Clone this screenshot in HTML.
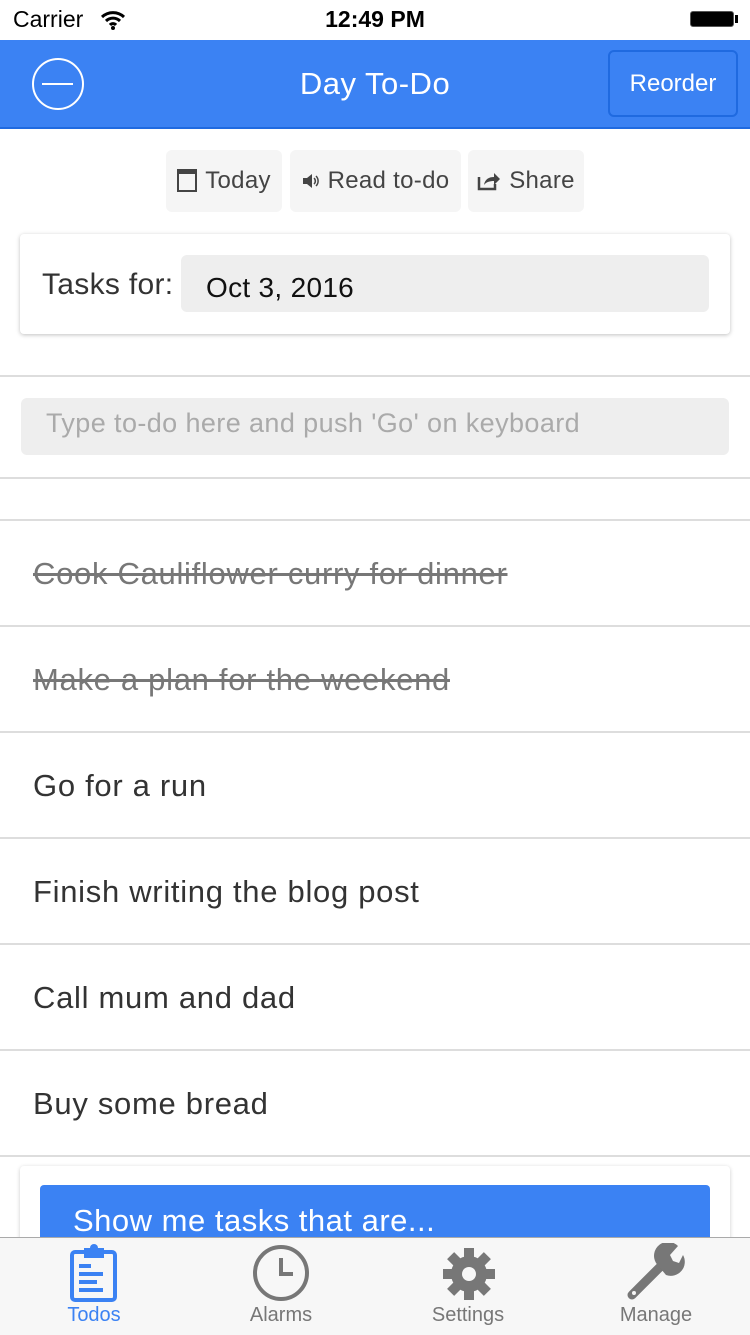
<!DOCTYPE html>
<html><head><style>
body{margin:0;width:750px;height:1334px;position:relative;overflow:hidden;background:#fff;font-family:"Liberation Sans",sans-serif;color:#333}
.a{position:absolute}
.hl{position:absolute;left:0;width:750px;height:2px;background:#ddd}
.row{position:absolute;left:33px;font-size:31px;color:#333;line-height:40px;letter-spacing:0.7px}
.s{text-decoration:line-through;color:#777}
.btn{position:absolute;top:150px;height:62px;background:#f5f5f5;border-radius:6px;font-size:24px;color:#444;line-height:62px;display:flex;align-items:center;justify-content:center;letter-spacing:0.3px}
.tab{position:absolute;top:1304px;font-size:20px;color:#777;width:150px;text-align:center}
</style></head><body>
<div class="a" style="left:13px;top:6px;font-size:23px;color:#000">Carrier</div>
<svg class="a" style="left:100px;top:10px" width="26" height="20" viewBox="0 0 26 20"><path d="M2 7a16 16 0 0 1 22 0M6 11a10 10 0 0 1 14 0M10 15a4 4 0 0 1 6 0" stroke="#000" stroke-width="3" fill="none"/><circle cx="13" cy="18" r="2"/></svg>
<div class="a" style="left:0;width:750px;top:6px;text-align:center;font-size:23px;font-weight:bold;color:#000">12:49 PM</div>
<div class="a" style="left:690px;top:11px;width:44px;height:16px;border:1px solid #555;border-radius:3px;background:#000;box-sizing:border-box"></div>
<div class="a" style="left:735px;top:15px;width:3px;height:8px;background:#000"></div>
<div class="a" style="left:0;top:40px;width:750px;height:87px;background:#3b82f3;border-bottom:2px solid #1f6ae0"></div>
<div class="a" style="left:32px;top:58px;width:48px;height:48px;border:2px solid #fff;border-radius:50%"></div>
<div class="a" style="left:42px;top:83px;width:31px;height:2px;background:#fff"></div>
<div class="a" style="left:0;width:750px;top:66px;text-align:center;font-size:31px;color:#fff;letter-spacing:0.5px">Day To-Do</div>
<div class="a" style="left:608px;top:50px;width:130px;height:67px;border:2px solid #1f6ae0;border-radius:6px;box-sizing:border-box;color:#fff;font-size:24px;text-align:center;line-height:64px">Reorder</div>
<div class="btn" style="left:166px;width:116px"><span style="display:inline-block;width:16px;height:16px;border:2px solid #444;border-top-width:5px;margin-right:8px;position:relative;top:-1px"></span>Today</div>
<div class="btn" style="left:290px;width:171px"><svg width="18" height="16" style="margin-right:8px"><path d="M1 5h4l5-4v14l-5-4H1z" fill="#444"/><path d="M12 5a4 4 0 0 1 0 6M14 3a7 7 0 0 1 0 10" stroke="#444" stroke-width="1.5" fill="none"/></svg>Read to-do</div>
<div class="btn" style="left:468px;width:116px"><svg width="24" height="20" style="margin-right:8px"><path d="M2 6v12h16v-5" stroke="#444" stroke-width="2.5" fill="none"/><path d="M7 14c1-6 5-8 10-8V2l6 6-6 6v-4c-4 0-8 1-10 4z" fill="#444"/></svg>Share</div>
<div class="a" style="left:20px;top:234px;width:710px;height:100px;border-radius:4px;box-shadow:0 1px 4px rgba(0,0,0,.25)"></div>
<div class="a" style="left:42px;top:268px;font-size:30px;color:#333;letter-spacing:0.3px">Tasks for:</div>
<div class="a" style="left:181px;top:255px;width:528px;height:57px;background:#eee;border-radius:6px"></div>
<div class="a" style="left:206px;top:272px;font-size:28px;color:#111;letter-spacing:0.3px">Oct 3, 2016</div>
<div class="hl" style="top:375px"></div>
<div class="a" style="left:21px;top:398px;width:708px;height:57px;background:#eee;border-radius:6px"></div>
<div class="a" style="left:46px;top:408px;font-size:27px;color:#aaa;letter-spacing:0.4px">Type to-do here and push 'Go' on keyboard</div>
<div class="hl" style="top:477px"></div>
<div class="hl" style="top:519px"></div>
<div class="row s" style="top:554px">Cook Cauliflower curry for dinner</div>
<div class="hl" style="top:625px"></div>
<div class="row s" style="top:660px">Make a plan for the weekend</div>
<div class="hl" style="top:731px"></div>
<div class="row" style="top:766px">Go for a run</div>
<div class="hl" style="top:837px"></div>
<div class="row" style="top:872px">Finish writing the blog post</div>
<div class="hl" style="top:943px"></div>
<div class="row" style="top:978px">Call mum and dad</div>
<div class="hl" style="top:1049px"></div>
<div class="row" style="top:1084px">Buy some bread</div>
<div class="hl" style="top:1155px"></div>
<div class="a" style="left:20px;top:1166px;width:710px;height:100px;border-radius:4px;box-shadow:0 1px 4px rgba(0,0,0,.2)"></div>
<div class="a" style="left:40px;top:1185px;width:670px;height:80px;background:#3b82f3;border-radius:4px"></div>
<div class="a" style="left:73px;top:1203px;font-size:31px;color:#fff;letter-spacing:0.5px">Show me tasks that are...</div>
<div class="a" style="left:0;top:1237px;width:750px;height:97px;background:#f7f7f7;border-top:1px solid #aaa"></div>
<svg class="a" style="left:70px;top:1244px" width="48" height="58"><rect x="2" y="8" width="43" height="48" rx="3" fill="none" stroke="#3b82f3" stroke-width="4"/><path d="M14 4h20v10H14z" fill="#3b82f3"/><circle cx="24" cy="4" r="4" fill="#3b82f3"/><path d="M9 22h12M9 30h24M9 38h18M9 46h24" stroke="#3b82f3" stroke-width="4"/></svg>
<svg class="a" style="left:252px;top:1244px" width="58" height="58"><circle cx="29" cy="29" r="26" fill="none" stroke="#777" stroke-width="4"/><path d="M29 14v16h12" stroke="#777" stroke-width="4" fill="none"/></svg>
<svg class="a" style="left:443px;top:1248px" width="52" height="52" viewBox="0 0 52 52"><g fill="#777"><circle cx="26" cy="26" r="18"/><rect x="21" y="0" width="10" height="52"/><rect x="0" y="21" width="52" height="10"/><rect x="21" y="0" width="10" height="52" transform="rotate(45 26 26)"/><rect x="21" y="0" width="10" height="52" transform="rotate(-45 26 26)"/></g><circle cx="26" cy="26" r="7" fill="#f7f7f7"/></svg>
<svg class="a" style="left:626px;top:1243px" width="60" height="60"><path d="M6 52L36 22" stroke="#777" stroke-width="9" stroke-linecap="round"/><path d="M30 20a14 14 0 0 1 22-17l-8 9 3 6 6 2 4-8a14 14 0 0 1-17 20z" fill="#777"/><circle cx="8" cy="50" r="2" fill="#f7f7f7"/></svg>
<div class="tab" style="left:19px;color:#3b82f3">Todos</div>
<div class="tab" style="left:206px">Alarms</div>
<div class="tab" style="left:393px">Settings</div>
<div class="tab" style="left:581px">Manage</div>
</body></html>
